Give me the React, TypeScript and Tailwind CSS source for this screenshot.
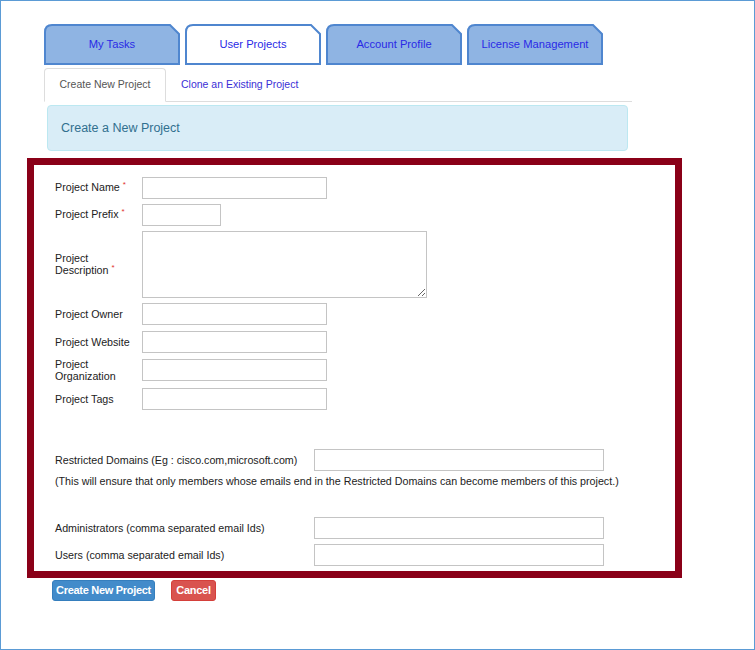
import React from "react";

function Tab({ label, active }: { label: string; active?: boolean }) {
  return (
    <div className="relative w-[136px] h-[41px] flex items-center justify-center">
      <svg className="absolute inset-0" width="136" height="41" viewBox="0 0 136 41">
        <path
          d="M1 40 L1 8 Q1 1 8 1 L126 1 L135 10 L135 40 Z"
          fill={active ? "#ffffff" : "#8fb4e3"}
          stroke="#4f86cf"
          strokeWidth="2"
        />
      </svg>
      <span className="relative text-[11.2px] text-[#2a2ae6]">{label}</span>
    </div>
  );
}

function Req() {
  return <span className="text-[#e03030] text-[8px] relative -top-[4px] ml-[3px]">*</span>;
}

function Input({ w }: { w: string }) {
  return <input className={`${w} h-[22px] border border-[#c4c4c4] bg-white outline-none`} />;
}

function Row({ label, children, mt, lw = "w-[87px]", h = "h-[22px]" }: { label: React.ReactNode; children: React.ReactNode; mt: string; lw?: string; h?: string }) {
  return (
    <div className={`flex items-center ${h} ${mt}`}>
      <div className={`${lw} shrink-0 leading-[12px]`}>{label}</div>
      {children}
    </div>
  );
}

export default function App() {
  return (
    <div
      className="w-[755px] h-[650px] border border-[#5b9bd5] bg-white overflow-hidden"
      style={{ fontFamily: '"Liberation Sans", Arial, sans-serif' }}
    >
      {/* Top tabs */}
      <div className="flex gap-[5px] ml-[43px] mt-[23px]">
        <Tab label="My Tasks" />
        <Tab label="User Projects" active />
        <Tab label="Account Profile" />
        <Tab label="License Management" />
      </div>

      {/* Sub tabs */}
      <div className="ml-[43px] mt-[4px] w-[588px] flex items-end border-b border-[#dddddd] h-[33px]">
        <div className="w-[122px] h-[34px] -mb-px border border-[#dddddd] border-b-white bg-white rounded-t-[4px] flex items-center justify-center text-[10.5px] text-[#555555]">
          Create New Project
        </div>
        <div className="h-[33px] flex items-center ml-[15px] text-[10.5px] text-[#3a2fd6]">
          Clone an Existing Project
        </div>
      </div>

      {/* Alert */}
      <div className="ml-[46px] mt-[3px] w-[581px] h-[46px] bg-[#d9edf7] border border-[#bce8f1] rounded-[4px] flex items-center px-[13px] text-[12.5px] text-[#31708f]">
        Create a New Project
      </div>

      {/* Red framed form */}
      <div className="ml-[26px] mt-[7px] w-[655px] h-[420px] border-[7px] border-[#8a0018] pl-[21px] pt-[12px] text-[10.7px] text-[#222222]">
        <Row mt="" label={<>Project Name<Req /></>}>
          <Input w="w-[185px]" />
        </Row>
        <Row mt="mt-[5px]" label={<>Project Prefix<Req /></>}>
          <Input w="w-[79px]" />
        </Row>
        <Row mt="mt-[5px]" h="h-[67px]" label={<>Project<br />Description<Req /></>}>
          <textarea className="w-[285px] h-[67px] border border-[#c4c4c4] bg-white outline-none resize" />
        </Row>
        <Row mt="mt-[5px]" label="Project Owner">
          <Input w="w-[185px]" />
        </Row>
        <Row mt="mt-[6px]" label="Project Website">
          <Input w="w-[185px]" />
        </Row>
        <Row mt="mt-[6px]" label={<>Project<br />Organization</>}>
          <Input w="w-[185px]" />
        </Row>
        <Row mt="mt-[7px]" label="Project Tags">
          <Input w="w-[185px]" />
        </Row>

        <Row mt="mt-[39px]" lw="w-[259px]" label="Restricted Domains (Eg : cisco.com,microsoft.com)">
          <Input w="w-[290px]" />
        </Row>
        <div className="mt-[4px] leading-[12px]">
          (This will ensure that only members whose emails end in the Restricted Domains can become members of this project.)
        </div>

        <Row mt="mt-[30px]" lw="w-[259px]" label="Administrators (comma separated email Ids)">
          <Input w="w-[290px]" />
        </Row>
        <Row mt="mt-[5px]" lw="w-[259px]" label="Users (comma separated email Ids)">
          <Input w="w-[290px]" />
        </Row>
      </div>

      {/* Buttons */}
      <div className="flex ml-[51px] mt-[2px] gap-[16px]">
        <button className="w-[103px] h-[21px] bg-[#428bca] border border-[#357ebd] rounded-[3px] text-white font-bold text-[11px] tracking-[-0.3px]">
          Create New Project
        </button>
        <button className="w-[45px] h-[21px] bg-[#d9534f] border border-[#d43f3a] rounded-[3px] text-white font-bold text-[11px] tracking-[-0.3px]">
          Cancel
        </button>
      </div>
    </div>
  );
}
